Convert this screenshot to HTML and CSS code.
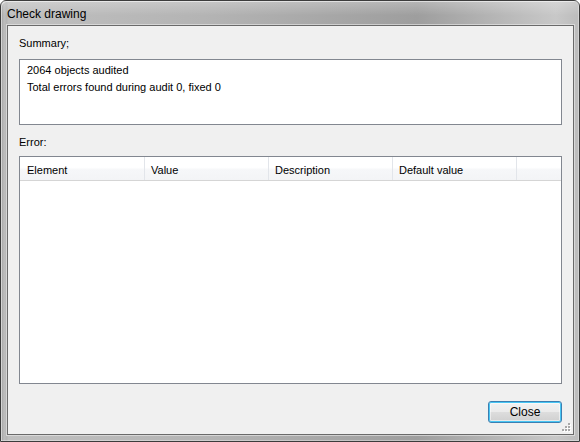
FILE: index.html
```html
<!DOCTYPE html>
<html>
<head>
<meta charset="utf-8">
<title>Check drawing</title>
<link rel="stylesheet" href="styles.css">
</head>
<body>
<div class="window">
  <div class="titlebar"><span class="title">Check drawing</span></div>
  <div class="client">
    <div class="label label-summary">Summary;</div>
    <div class="summary-box">
      <div class="line">2064 objects audited</div>
      <div class="line">Total errors found during audit 0, fixed 0</div>
    </div>
    <div class="label label-error">Error:</div>
    <div class="list-box">
      <div class="list-header">
        <div class="col col-first">Element</div>
        <div class="col">Value</div>
        <div class="col">Description</div>
        <div class="col">Default value</div>
        <div class="col-fill"></div>
      </div>
    </div>
    <div class="buttons">
      <button class="btn">Close</button>
    </div>
    <svg class="grip" width="12" height="12" viewBox="0 0 12 12">
      <g fill="#ffffff">
        <rect x="9" y="3" width="2" height="2"/>
        <rect x="6" y="6" width="2" height="2"/>
        <rect x="9" y="6" width="2" height="2"/>
        <rect x="3" y="9" width="2" height="2"/>
        <rect x="6" y="9" width="2" height="2"/>
        <rect x="9" y="9" width="2" height="2"/>
      </g>
      <g fill="#a8a8a8">
        <rect x="8" y="2" width="2" height="2"/>
        <rect x="5" y="5" width="2" height="2"/>
        <rect x="8" y="5" width="2" height="2"/>
        <rect x="2" y="8" width="2" height="2"/>
        <rect x="5" y="8" width="2" height="2"/>
        <rect x="8" y="8" width="2" height="2"/>
      </g>
    </svg>
  </div>
</div>
</body>
</html>
```

FILE: styles.css
```css
* {
  box-sizing: border-box;
}

html, body {
  margin: 0;
  padding: 0;
  width: 580px;
  height: 442px;
  overflow: hidden;
  background: #ffffff;
}

body {
  font-family: "Liberation Sans", Arial, sans-serif;
  font-size: 11px;
  color: #000000;
}

.window {
  width: 580px;
  height: 442px;
  border: 1px solid #3c3c3c;
  border-radius: 6px 6px 0 0;
  background:
    linear-gradient(90deg, #9c9c9c 0px, #bdbdbd 3px, #b4b4b4 6px, rgba(180,180,180,0) 7px),
    linear-gradient(90deg, #c0c0c0 0%, #b4b4b4 35%, #9e9e9e 72%, #c8c8c8 96%, #bcbcbc 100%);
  box-shadow: inset 1px 1px 0 rgba(255,255,255,0.55), inset -1px -1px 0 rgba(255,255,255,0.35);
  display: flex;
  flex-direction: column;
}

.titlebar {
  height: 24px;
  padding-left: 6px;
  display: flex;
  align-items: center;
  background: linear-gradient(rgba(255,255,255,0.25), rgba(255,255,255,0) 60%);
}

.title {
  font-size: 12px;
  color: #000000;
  line-height: 16px;
  padding-top: 1px;
}

.client {
  position: relative;
  margin: 0 5px 6px 6px;
  height: 410px;
  border: 1px solid #6a6a6a;
  box-shadow: 0 0 0 1px rgba(235,235,235,0.6);
  background: #f0f0f0;
  padding: 10px 11px 0 11px;
  display: flex;
  flex-direction: column;
}

.label {
  line-height: 14px;
  height: 14px;
}

.label-summary {
  margin-bottom: 9px;
}

.summary-box {
  height: 66px;
  border: 1px solid #828790;
  background: #ffffff;
  padding: 2px 7px 0 7px;
}

.line {
  line-height: 17px;
}

.label-error {
  margin-top: 10px;
  margin-bottom: 7px;
}

.list-box {
  height: 228px;
  border: 1px solid #828790;
  background: #ffffff;
}

.list-header {
  display: flex;
  height: 24px;
  border-bottom: 1px solid #d5d5d5;
  background: linear-gradient(#ffffff 0%, #ffffff 45%, #f6f7f9 55%, #f3f4f6 100%);
}

.col {
  width: 124px;
  padding: 6px 0 0 6px;
  line-height: 14px;
  border-right: 1px solid #e2e5ea;
  white-space: nowrap;
}

.col-first {
  width: 125px;
  padding-left: 7px;
}

.col-fill {
  flex: 1;
}

.buttons {
  display: flex;
  justify-content: flex-end;
  margin-top: 17px;
}

.btn {
  width: 74px;
  height: 22px;
  margin-right: 0;
  font-family: "Liberation Sans", Arial, sans-serif;
  font-size: 12px;
  color: #000000;
  border: 1px solid #3c7fb1;
  border-radius: 3px;
  background: linear-gradient(#f2f2f2 0%, #ebebeb 48%, #dddddd 52%, #cfcfcf 100%);
  box-shadow: inset 0 0 0 1px #48c6f4, inset 0 0 0 2px rgba(255,255,255,0.5);
  padding: 0 0 1px 0;
  line-height: 18px;
}

.grip {
  position: absolute;
  right: 1px;
  bottom: 1px;
}
```
